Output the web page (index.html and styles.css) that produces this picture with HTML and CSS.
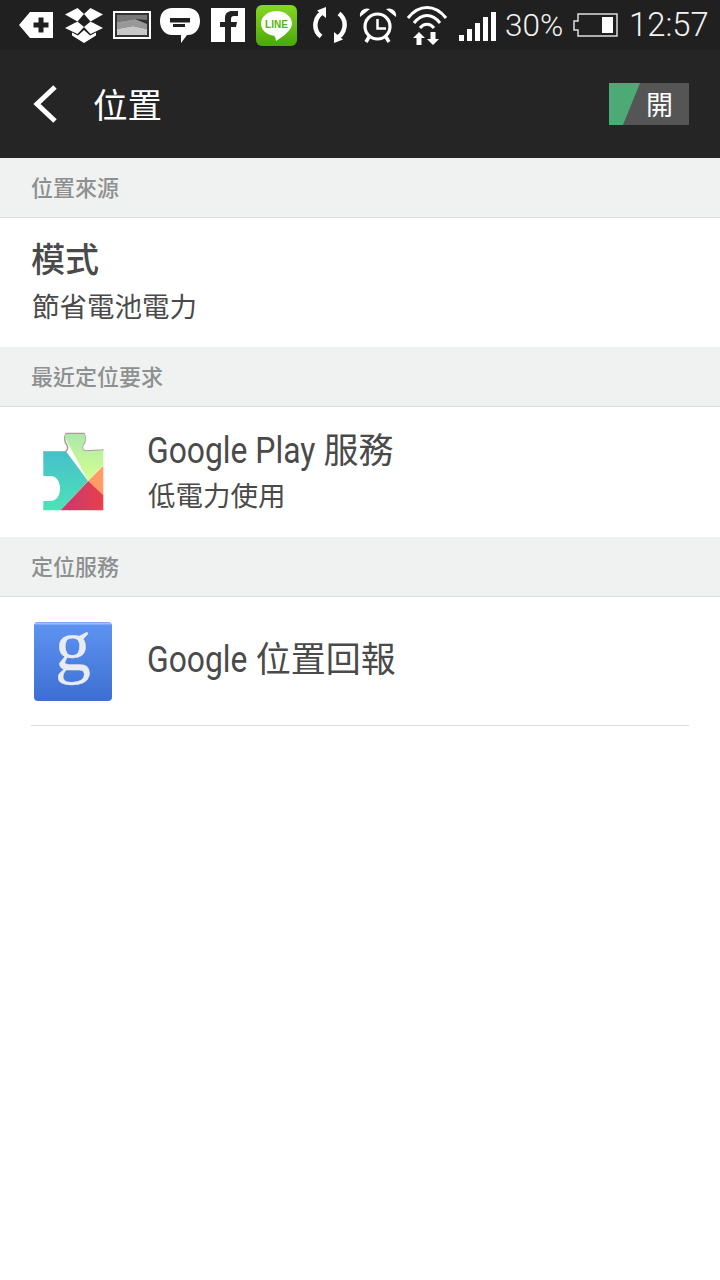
FILE: index.html
```html
<!DOCTYPE html>
<html lang="zh-Hant">
<head>
<meta charset="utf-8">
<title>位置</title>
<link rel="stylesheet" href="styles.css">
</head>
<body>
<div class="status">
  <svg class="si i-back" viewBox="0 0 34 26"><path fill="#fff" fill-rule="evenodd" d="M0 13 11 0H34V26H11ZM19.500 5.500V10.500H14.500V15.500H19.500V20.500H24.500V15.500H29.500V10.500H24.500V5.500Z"/></svg>
  <svg class="si i-drop" viewBox="0 0 38 35"><g fill="#fff"><path d="M12.500 0 19 6 12.500 13.500 0 6.500Z"/><path d="M25.500 0 38 6.500 25.500 13.500 19 6Z"/><path d="M0 20 12.500 13.500 19 19 12.500 26Z"/><path d="M38 20 25.500 13.500 19 19 25.500 26Z"/><path d="M19 22 25 27.500 31 24.500V27.500L19 35 7 27.500V24.500L13 27.500Z"/></g></svg>
  <svg class="si i-img" viewBox="0 0 38 28"><rect x="1" y="1" width="36" height="26" fill="#333" stroke="#fff" stroke-width="2"/><path fill="#777" d="M4 4H34V9L22 8 4 11Z"/><path fill="#999" d="M4 11 22 8 34 13V18L20 15 4 18Z"/><path fill="#c8c8c8" d="M4 18 20 15 34 18V24H4Z"/></svg>
  <svg class="si i-chat" viewBox="0 0 40 35"><path fill="#fff" fill-rule="evenodd" d="M12 0H28C35 0 40 5 40 13S35 27 28 27H27L21 35V27H12C5 27 0 21 0 13S5 0 12 0ZM10 10V14.500H30V10ZM13 16V19H25V16Z"/></svg>
  <svg class="si i-fb" viewBox="0 0 34 34"><path fill="#fff" d="M0 0H34V34H0Z"/><path fill="#222" d="M14 34V19H9V14H14V10C14 5 17 3 21 3H27V8H23C21 8 20 9 20 11V14H26L25 19H20V34Z"/></svg>
  <svg class="si i-line" viewBox="0 0 41 41"><defs><linearGradient id="lg" x1="0" y1="0" x2="0" y2="1"><stop offset="0" stop-color="#84d81f"/><stop offset="1" stop-color="#4ba80c"/></linearGradient></defs><rect width="41" height="41" rx="6" fill="url(#lg)"/><path fill="#fff" d="M20.500 6C29 6 36 11.500 36 18.500 36 25 28 31 20 36 19.500 32 19 31 17 30.500 10 29.500 5 24.500 5 18.500 5 11.500 12 6 20.500 6Z"/><text class="line-t" x="20.500" y="22.500" text-anchor="middle">LINE</text></svg>
  <svg class="si i-sync" viewBox="0 0 36 36"><g fill="none" stroke="#fff" stroke-width="4.500"><path d="M13 4.400A14.500 14.500 0 0 0 9 29.500"/><path d="M23 31.600A14.500 14.500 0 0 0 27 6.500"/></g><path fill="#fff" d="M5 3.500 14 0V11ZM31 32.500 22 36V25Z"/></svg>
  <svg class="si i-alarm" viewBox="0 0 38 37"><g fill="#fff"><path d="M1 10C0 4 5 0 11 2Z"/><path d="M37 10C38 4 33 0 27 2Z"/></g><circle cx="18.500" cy="19.500" r="12.500" fill="none" stroke="#fff" stroke-width="3.200"/><path d="M18.500 12V21.500H27" fill="none" stroke="#fff" stroke-width="2.500"/><path d="M10 30 7 35M27 30 30 35" stroke="#fff" stroke-width="3.500"/></svg>
  <svg class="si i-wifi" viewBox="0 0 42 40"><g fill="none" stroke="#fff" stroke-width="3"><path d="M2 13C13 -1 29 -1 40 13"/><path d="M8 18C16 8 26 8 34 18"/><path d="M14 23C18 18 24 18 28 23"/></g><path fill="#fff" d="M13 27 19 33H15.500V40H10.500V33H7ZM24.500 27H29.500V34H33L27 40 21 34H24.500Z"/></svg>
  <svg class="si i-sig" viewBox="0 0 38 30"><path fill="#fff" d="M0 23H5V29H0ZM8 17H13V29H8ZM16 11H21V29H16ZM24 5H29V29H24ZM32 0H37V29H32Z"/></svg>
  <span class="pct">30%</span>
  <svg class="si i-bat" viewBox="0 0 45 24"><path fill="none" stroke="#ddd" stroke-width="1.500" d="M5 1H44V23H5V17H1V8H5Z"/><rect x="29" y="4" width="11" height="16" fill="#fff"/></svg>
  <span class="time">12:57</span>
</div>

<header class="bar">
  <svg class="back" viewBox="0 0 26 38"><path d="M23 2 5 19 23 36" fill="none" stroke="#fff" stroke-width="5"/></svg>
  <h1 class="title">位置</h1>
  <div class="toggle"><span class="toggle-on"></span><span class="toggle-t">開</span></div>
</header>

<div class="sect">位置來源</div>
<div class="row row-plain">
  <div class="main strong">模式</div>
  <div class="sub">節省電池電力</div>
</div>

<div class="sect">最近定位要求</div>
<div class="row row-icon">
  <svg class="play" viewBox="0 0 66 80">
    <defs>
      <clipPath id="pz"><path d="M3.300 19.700H25C28 18 28 15 27 13 24 9 24 5 26 2H44C46 5 46 9 43 13 42 15 42 18 45 19.300L63.300 18.300V78.300H3.300V69H10C17 69 20 63 20 56.500 20 50 17 44 10 44H3.300Z"/></clipPath>
      <linearGradient id="pt" x1="0" y1="0" x2="0" y2="1"><stop offset="0" stop-color="#46bfcb"/><stop offset="1" stop-color="#4ee3b6"/></linearGradient>
      <linearGradient id="pg" x1="0" y1="0" x2="0" y2="1"><stop offset="0" stop-color="#a9e8ac"/><stop offset="1" stop-color="#d6ff8e"/></linearGradient>
      <linearGradient id="pr" x1="0" y1="0" x2="1" y2="0"><stop offset="0" stop-color="#c23a72"/><stop offset="1" stop-color="#ea4048"/></linearGradient>
    </defs>
    <path d="M3.300 20H25C28 18 28 15 27 13 24 9 24 5 26 1.500H44C46 5 46 9 43 13 42 15 42 18 45 19L63.500 18" fill="none" stroke="#a89e94" stroke-width="1.500"/>
    <g clip-path="url(#pz)">
      <path fill="url(#pt)" d="M0 18H25L48 49 19 80H0Z"/>
      <path fill="url(#pg)" d="M22 0H66V30L48.300 49Z"/>
      <path fill="#ff9c68" d="M48.300 49 66 31V67Z"/>
      <path fill="url(#pr)" d="M48.300 49 66 66V80H19Z"/>
    </g>
  </svg>
  <div class="texts">
    <div class="main"><span class="latin latin-play">Google Play</span> 服務</div>
    <div class="sub">低電力使用</div>
  </div>
</div>

<div class="sect">定位服務</div>
<div class="row row-icon row-last">
  <svg class="gicon" viewBox="0 0 80 80">
    <defs><linearGradient id="gb" x1="0" y1="0" x2="0" y2="1"><stop offset="0" stop-color="#5f94f2"/><stop offset="1" stop-color="#3d6fd2"/></linearGradient></defs>
    <rect x="1" y="1" width="78" height="79" rx="4" fill="url(#gb)"/>
    <path d="M2 2.500H78" stroke="#9cc0f8" stroke-width="2"/>
    <text class="g-t" x="40" y="49" text-anchor="middle">g</text>
  </svg>
  <div class="texts texts-one"><div class="main"><span class="latin latin-g">Google</span> 位置回報</div></div>
</div>
</body>
</html>
```
FILE: styles.css
```css
* { box-sizing: border-box; }
html, body { margin: 0; padding: 0; background: #fff; }
body { width: 720px; font-family: "Noto Sans CJK TC", "Noto Sans", sans-serif; }

.status { display: flex; align-items: center; height: 50px; padding-left: 19px; background: #202020; color: #f2f2f2; font-family: Roboto, sans-serif; font-weight: 300; }
.si { display: block; flex: none; }
.i-back { width: 34px; height: 26px; }
.i-drop { width: 38px; height: 35px; margin-left: 12px; }
.i-img { width: 38px; height: 28px; margin-left: 10px; }
.i-chat { width: 40px; height: 35px; margin-left: 9px; }
.i-fb { width: 34px; height: 34px; margin-left: 11px; }
.i-line { width: 41px; height: 41px; margin-left: 11px; }
.i-sync { width: 36px; height: 36px; margin-left: 15px; }
.i-alarm { width: 38px; height: 37px; margin-left: 11px; }
.i-wifi { width: 42px; height: 40px; margin-left: 9px; }
.i-sig { width: 38px; height: 30px; margin-left: 11px; margin-top: 3px; }
.i-bat { width: 45px; height: 24px; margin-left: 10px; }
.pct { font-size: 31.500px; margin-left: 8px; width: 58px; white-space: nowrap; }
.time { font-size: 32.800px; margin-left: 11px; white-space: nowrap; }
.line-t { font: 700 10px "Liberation Sans", sans-serif; fill: #55b512; }

.bar { display: flex; align-items: center; height: 108px; background: #252525; padding: 0 31px 0 32px; }
.back { width: 26px; height: 38px; flex: none; }
.title { margin: 0 0 0 35px; padding-bottom: 2px; flex: 1; font-size: 34.500px; font-weight: 400; color: #fff; line-height: 1; }
.toggle { position: relative; display: flex; align-items: center; justify-content: flex-end; width: 80px; height: 42px; padding: 0 16px 2px 0; background: #555; }
.toggle-on { position: absolute; left: 0; top: 0; width: 31px; height: 42px; background: #4cab74; clip-path: polygon(0 0, 100% 0, 45% 100%, 0 100%); }
.toggle-t { font-size: 27px; font-weight: 400; line-height: 1; color: #fff; }

.sect { display: flex; align-items: center; height: 60px; padding: 0 0 4px 31px; background: #f0f2f2; border-bottom: 1px solid #dcdede; font-size: 22px; font-weight: 500; color: #8e9090; }
.row { background: #fff; }
.row-plain { height: 129px; padding: 17px 0 0 31px; }
.row-icon { display: flex; align-items: center; height: 130px; }
.row-last { position: relative; height: 129px; margin-right: 31px; }
.row-last::after { content: ""; position: absolute; left: 31px; right: 0; bottom: 0; height: 1px; background: #dcdede; }
.main { font-size: 35px; line-height: 46px; color: #4a4a4a; white-space: nowrap; }
.strong { font-size: 34px; font-weight: 500; margin-bottom: 4px; }
.sub { font-size: 27.500px; line-height: 40px; padding-left: 1px; color: #4a4a4a; white-space: nowrap; }
.texts { padding-bottom: 5px; }
.texts-one { padding-bottom: 6px; }
.play { width: 66px; height: 80px; margin-left: 40px; margin-right: 41px; flex: none; }
.gicon { width: 80px; height: 80px; margin: 0 34px 2px 33px; flex: none; overflow: visible; }
.g-t { font: 400 72px "Liberation Serif", serif; fill: #e8ecf2; stroke: #e8ecf2; stroke-width: 0.300px; }
.latin { display: inline-block; font-family: Roboto, sans-serif; font-size: 37px; transform: scaleX(.86); transform-origin: left center; }
.latin-play { margin-right: -27px; }
.latin-g { margin-right: -16px; }
```
